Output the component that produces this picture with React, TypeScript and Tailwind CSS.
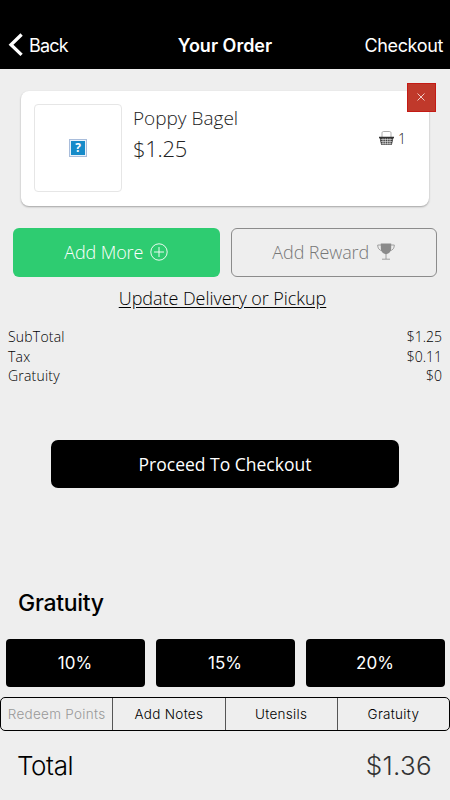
import clsx from 'clsx'

const totals = [
  { label: 'SubTotal', value: '$1.25' },
  { label: 'Tax', value: '$0.11' },
  { label: 'Gratuity', value: '$0' },
]

const tips = ['10%', '15%', '20%']

const segments = [
  { name: 'Redeem Points', disabled: true },
  { name: 'Add Notes', disabled: false },
  { name: 'Utensils', disabled: false },
  { name: 'Gratuity', disabled: false },
]

function BasketIcon() {
  return (
    <svg width="15" height="14" viewBox="0 0 15 14" fill="none" aria-hidden="true">
      <path d="M3 6V2.2C3 1 3.6.5 4.6.5h5.8c1 0 1.6.5 1.6 1.7V6" stroke="#999" strokeWidth="0.8" />
      <path d="M0 5.7h15v1.6h-.7l-1.4 6.4H2.1L.7 7.3H0z" fill="#333" />
      <path d="M1.5 8.4h12M2 10.4h11M2.4 12.3h10.2M4 7.4v6M6.3 7.4v6M8.7 7.4v6M11 7.4v6" stroke="#fff" strokeWidth="0.6" />
    </svg>
  )
}

function PlusCircleIcon() {
  return (
    <svg width="18" height="18" viewBox="0 0 18 18" fill="none" stroke="#fff" strokeWidth="0.9" className="-mt-0.5" aria-hidden="true">
      <circle cx="9" cy="9" r="8.2" />
      <path d="M9 4v10M4 9h10" />
    </svg>
  )
}

function TrophyIcon() {
  return (
    <svg width="18" height="17" viewBox="0 0 18 17" fill="none" className="-mt-0.5" aria-hidden="true">
      <path d="M3.8.5h10.4v4.8c0 3.2-1.9 5.2-5.2 6-3.3-.8-5.2-2.8-5.2-6z" fill="#8b8b8b" />
      <path d="M4 2H.7c0 3 1.2 5.2 4.5 5.8M14 2h3.3c0 3-1.2 5.2-4.5 5.8M9 11v5M5 16.2h8" stroke="#8b8b8b" strokeWidth="0.8" />
    </svg>
  )
}

function MissingImage() {
  return (
    <div className="flex size-[18px] items-center justify-center border border-[#a9bddb] bg-[#e8f1fa]">
      <div className="flex size-[14px] items-center justify-center bg-[#168bc9] font-['Open_Sans',sans-serif] text-[12px] leading-none font-bold text-white">
        ?
      </div>
    </div>
  )
}

function Header() {
  return (
    <header className="relative flex h-[69px] items-center justify-between bg-black pt-[21px] pr-[7px] pl-2 text-[18px] text-white">
      <button className="flex items-center gap-[5px]">
        <svg width="16" height="24" viewBox="0 0 16 24" fill="none" stroke="#fff" strokeWidth="3.3" aria-hidden="true">
          <path d="M13.6 1.5L3 11.7l10.6 10.2" />
        </svg>
        <span className="tracking-[-0.8px]">Back</span>
      </button>
      <h1 className="absolute inset-x-0 text-center text-[18px] font-semibold">Your Order</h1>
      <button className="relative tracking-[-0.35px]">Checkout</button>
    </header>
  )
}

function OrderItem() {
  return (
    <article className="relative mx-[21px] mt-[22px] flex h-[115px] rounded-lg bg-white pt-[13px] pl-[13px] font-['Open_Sans',sans-serif] font-[330] text-[#222] shadow-[0_1px_2px_rgba(0,0,0,0.32)]">
      <div className="flex size-[88px] items-center justify-center rounded-[4px] border border-[#e6e6e6]">
        <MissingImage />
      </div>
      <div className="ml-[11px]">
        <h2 className="text-[19px] leading-[28px]">Poppy Bagel</h2>
        <p className="text-[22px] leading-[32px] tracking-[-0.3px]">$1.25</p>
      </div>
      <div className="mt-[26px] mr-[23px] ml-auto flex h-4 items-center gap-1 text-[14px]">
        <BasketIcon />
        <span>1</span>
      </div>
      <button
        className="absolute -top-2 -right-[7px] flex size-[29px] items-center justify-center border border-[#c41a14] bg-[#c0392b]"
        aria-label="Remove item"
      >
        <svg width="8" height="8" viewBox="0 0 8 8" className="-mt-0.5 -ml-0.5" stroke="#f5dcd9" strokeWidth="0.9" aria-hidden="true">
          <path d="M.5.5l7 7M7.5.5l-7 7" />
        </svg>
      </button>
    </article>
  )
}

export default function App() {
  return (
    <div className="flex h-[800px] w-[450px] flex-col overflow-hidden bg-[#eee] font-['Inter',sans-serif] text-black">
      <Header />

      <main className="flex flex-1 flex-col font-['Open_Sans',sans-serif]">
        <OrderItem />

        {/* Cart actions */}
        <div className="mt-[22px] grid grid-cols-2 gap-[11px] px-[13px] text-[18px] font-[330]">
          <button className="flex h-[49px] items-center justify-center gap-[7px] rounded-md bg-[#2ecc71] text-white">
            <span className="tracking-[-0.1px]">Add More</span>
            <PlusCircleIcon />
          </button>
          <button className="flex h-[49px] items-center justify-center gap-2 rounded-md border border-[#8b8b8b] text-[#777]">
            <span className="tracking-[-0.1px]">Add Reward</span>
            <TrophyIcon />
          </button>
        </div>
        <a className="mt-[7px] mr-[5px] self-center text-[18px] leading-[29px] font-[330] tracking-[-0.05px] underline underline-offset-2">
          Update Delivery or Pickup
        </a>

        {/* Price breakdown */}
        <dl className="mt-[14px] px-2 text-[14px] leading-[19.5px] font-[330]">
          {totals.map((row) => (
            <div key={row.label} className="flex justify-between">
              <dt className="tracking-[0.2px]">{row.label}</dt>
              <dd>{row.value}</dd>
            </div>
          ))}
        </dl>

        <button className="mx-[51px] mt-[54px] h-12 rounded-[7px] bg-black pt-px text-[17.5px] text-white">
          Proceed To Checkout
        </button>
      </main>

      <footer>
        <h2 className="pl-[18px] text-[23px] leading-[30px] font-[450] tracking-[-0.3px]">Gratuity</h2>
        <div className="mt-[21px] flex gap-[11px] px-[5.5px]">
          {tips.map((tip) => (
            <button key={tip} className="h-12 flex-1 rounded-[4px] bg-black pt-0.5 text-[17px] text-white">
              {tip}
            </button>
          ))}
        </div>
        <div className="mt-[10px] flex h-[34px] rounded-[5px] border border-black">
          {segments.map((segment, index) => (
            <button
              key={segment.name}
              className={clsx(
                'flex-1 text-[13.5px] font-[350] tracking-[0.3px] whitespace-nowrap',
                index > 0 && 'border-l border-[#555]',
                segment.disabled ? 'text-[#999]' : 'text-black'
              )}
            >
              {segment.name}
            </button>
          ))}
        </div>
        <div className="flex h-[69px] items-center justify-between pr-[18px] pl-[17px] text-[26px]">
          <span className="font-light tracking-[-0.4px]">Total</span>
          <span className="font-light tracking-[0.3px] text-[#333]">$1.36</span>
        </div>
      </footer>
    </div>
  )
}
